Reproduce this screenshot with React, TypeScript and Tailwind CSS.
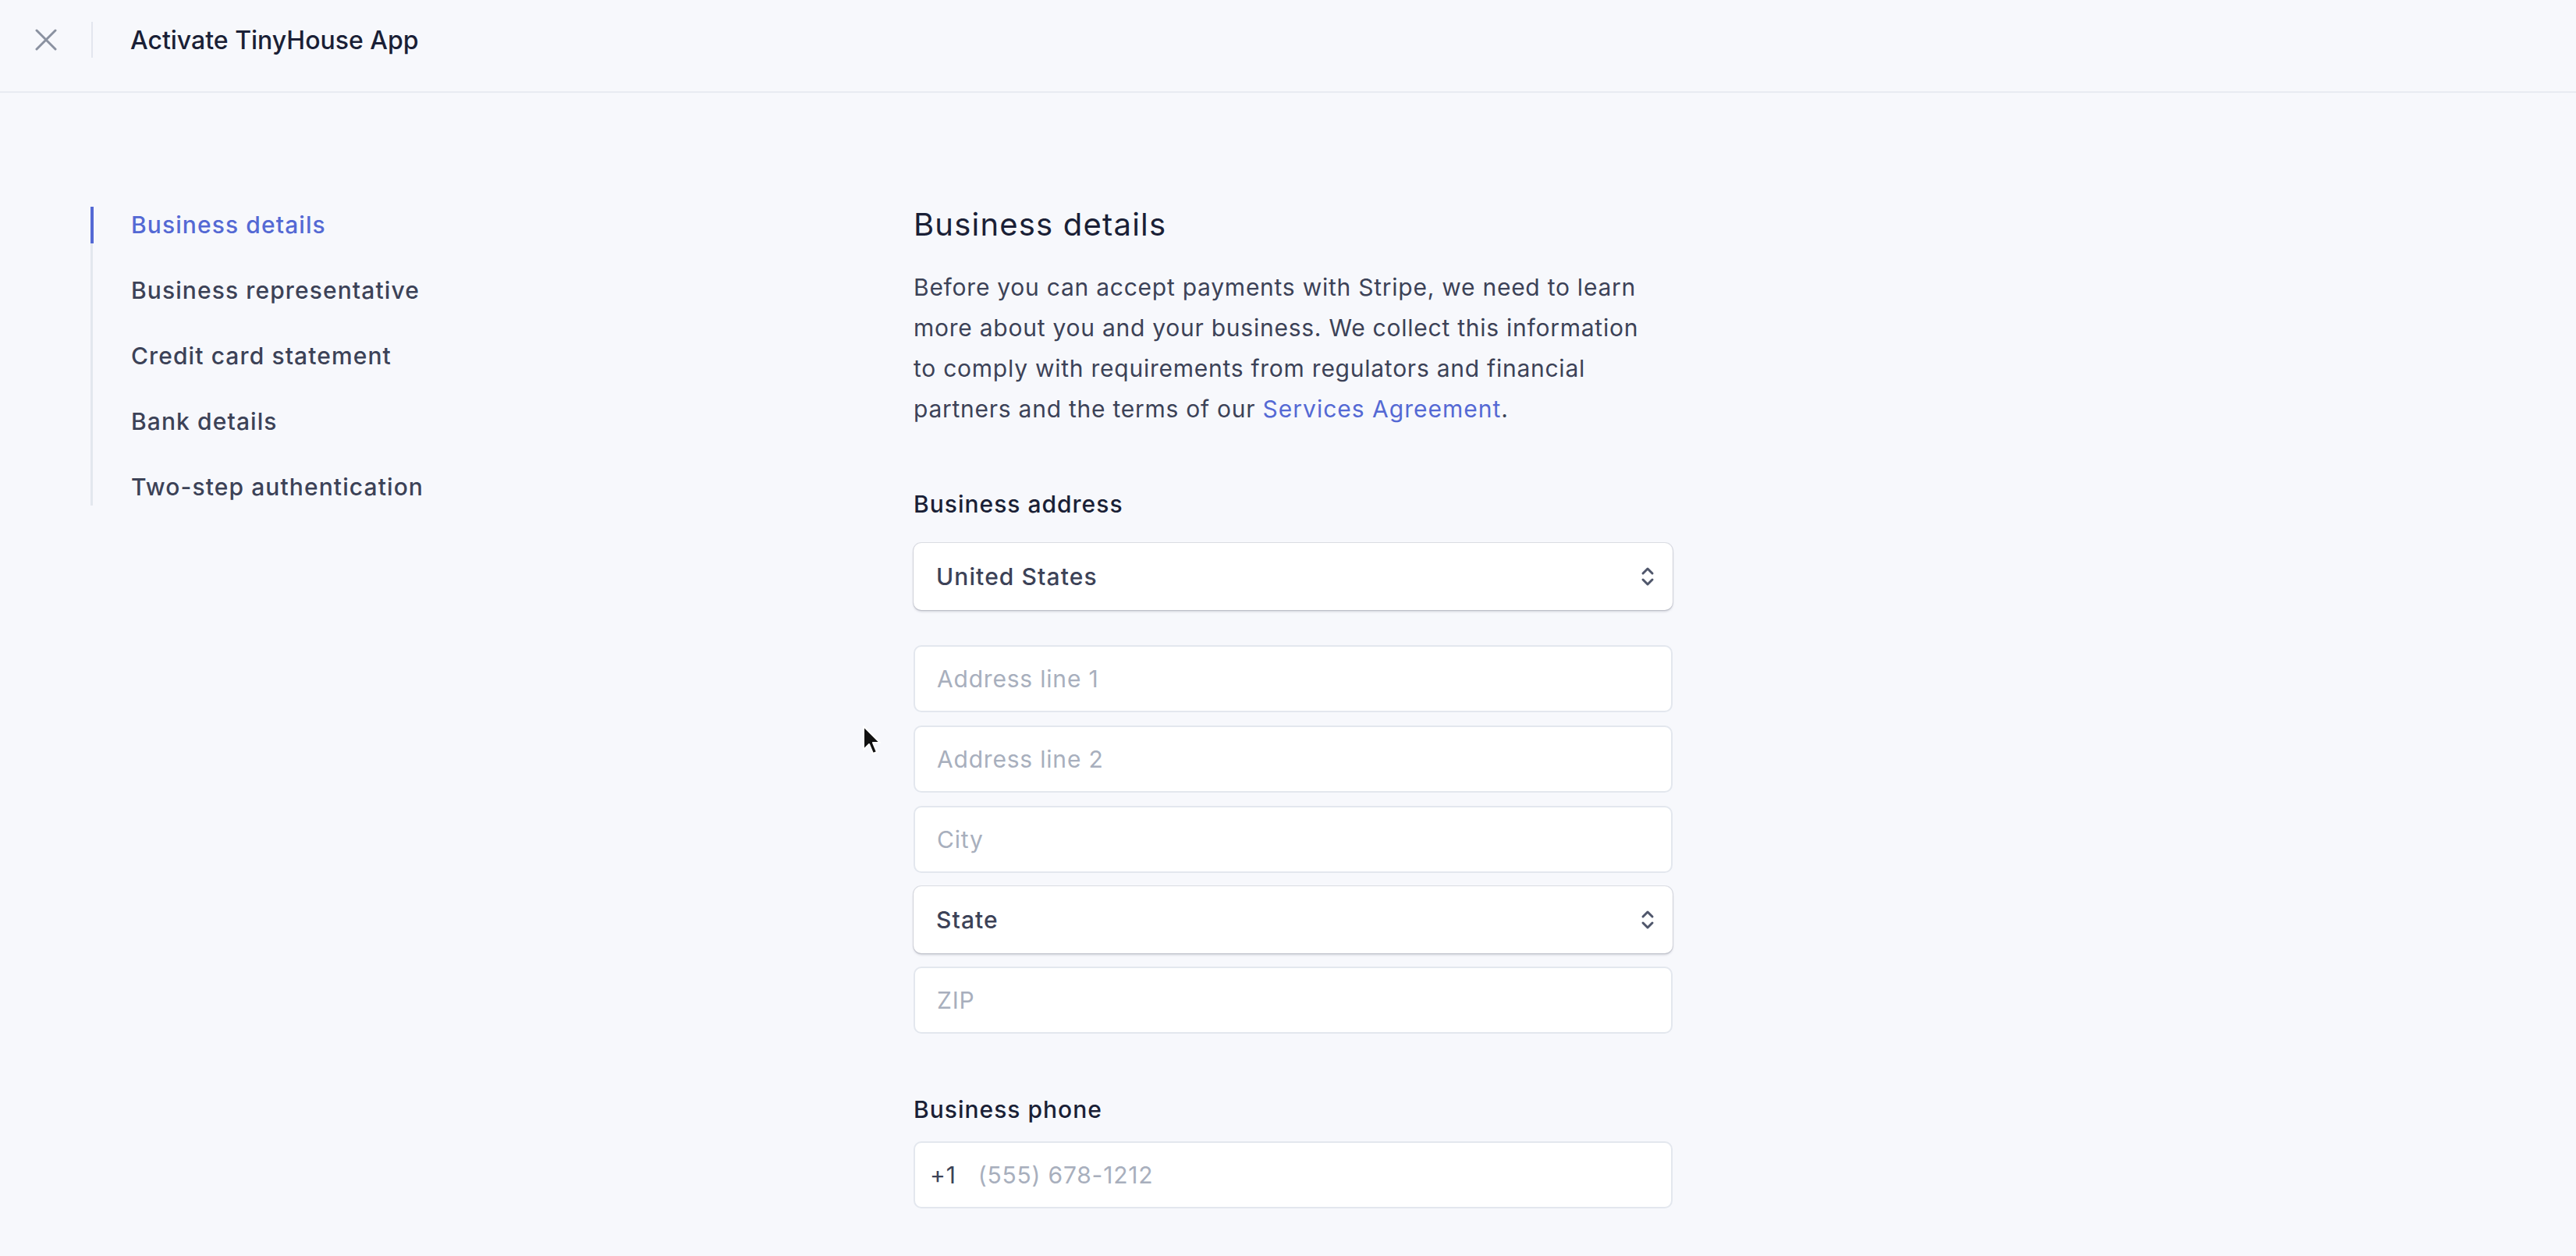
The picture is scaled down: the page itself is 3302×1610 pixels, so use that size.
const steps = [
    'Business details',
    'Business representative',
    'Credit card statement',
    'Bank details',
    'Two-step authentication',
];

const intro = [
    'Before you can accept payments with Stripe, we need to learn',
    'more about you and your business. We collect this information',
    'to comply with requirements from regulators and financial',
];

function Chevrons() {
    return (
        <svg width="20" height="30" viewBox="0 0 20 30" fill="none" className="shrink-0">
            <path d="M4 11 L10 5 L16 11" stroke="#4f566b" strokeWidth="3" strokeLinecap="round" strokeLinejoin="round" />
            <path d="M4 19 L10 25 L16 19" stroke="#4f566b" strokeWidth="3" strokeLinecap="round" strokeLinejoin="round" />
        </svg>
    );
}

function SelectBox({ value }: { value: string }) {
    return (
        <div className="h-[86px] flex items-center justify-between pl-[29px] pr-[22px] bg-white rounded-[10px] shadow-[0_0_0_1px_rgba(60,66,87,0.14),0_2px_3px_rgba(60,66,87,0.22)] text-[30px] font-medium tracking-[1.1px] text-[#3c4257]">
            <span>{value}</span>
            <Chevrons />
        </div>
    );
}

function TextBox({ placeholder }: { placeholder: string }) {
    return (
        <div className="h-[86px] flex items-center pl-[28px] bg-white rounded-[10px] border-2 border-[#e3e7ee] text-[30px] tracking-[0.8px] text-[#a8afbd]">
            {placeholder}
        </div>
    );
}

function Cursor() {
    return (
        <svg width="26" height="40" viewBox="0 0 26 40" className="absolute left-[1104px] top-[929px]">
            <path
                d="M3 2 L3 32 L10 25 L15 37 L20 35 L15 23 L24 23 Z"
                fill="#111"
                stroke="#fff"
                strokeWidth="2"
                strokeLinejoin="round"
            />
        </svg>
    );
}

export default function App() {
    return (
        <div className="relative min-h-screen bg-[#f7f8fc] font-['Inter',sans-serif] text-[#3c4257]">
            {/* Header */}
            <header className="h-[119px] flex items-center pb-[16px] border-b-2 border-[#e8ebf2]">
                <div className="w-[117px] flex justify-center">
                    <svg width="28" height="28" viewBox="0 0 28 28">
                        <path d="M2 2 L26 26 M26 2 L2 26" stroke="#8a91a0" strokeWidth="3" strokeLinecap="round" />
                    </svg>
                </div>
                <div className="w-[2px] h-[46px] bg-[#e3e6ee]" />
                <h1 className="ml-[48px] mt-[2px] text-[32px] leading-[40px] font-medium text-[#1a1f36]">Activate TinyHouse App</h1>
            </header>

            <div className="flex pl-[116px] pt-[147px] pb-[60px]">
                {/* Sidebar */}
                <nav className="w-[1055px] shrink-0 -mt-[1px]">
                    <ul className="flex flex-col gap-[37px] border-l-[3px] border-[#e3e7ee] w-fit">
                        {steps.map((step, i) => (
                            <li
                                key={step}
                                className={`h-[47px] flex items-center text-[30px] font-medium tracking-[1.1px] ${
                                    i === 0
                                        ? '-ml-[3px] border-l-4 border-[#5469d4] pl-[48px] text-[#5469d4]'
                                        : 'pl-[49px] text-[#3c4257]'
                                }`}
                            >
                                {step}
                            </li>
                        ))}
                    </ul>
                </nav>

                {/* Form */}
                <main className="w-[973px] -mt-[2px]">
                    <h2 className="text-[40px] leading-[48px] tracking-[1.2px] text-[#1a1f36]">Business details</h2>
                    <p className="mt-[30px] text-[30px] leading-[52px] tracking-[0.75px] text-[#3c4257]">
                        {intro.map((line) => (
                            <span key={line} className="block whitespace-nowrap">
                                {line}
                            </span>
                        ))}
                        <span className="block whitespace-nowrap">
                            partners and the terms of our{' '}
                            <span className="text-[#5469d4] tracking-[1px]">Services Agreement</span>.
                        </span>
                    </p>

                    <div className="mt-[76px] text-[30px] leading-[40px] font-medium tracking-[1px] text-[#1a1f36]">Business address</div>
                    <div className="mt-[30px]">
                        <SelectBox value="United States" />
                    </div>
                    <div className="mt-[45px] flex flex-col gap-[17px]">
                        <TextBox placeholder="Address line 1" />
                        <TextBox placeholder="Address line 2" />
                        <TextBox placeholder="City" />
                        <SelectBox value="State" />
                        <TextBox placeholder="ZIP" />
                    </div>

                    <div className="mt-[77px] text-[30px] leading-[40px] font-medium tracking-[1px] text-[#1a1f36]">Business phone</div>
                    <div className="mt-[21px] h-[86px] flex items-center pl-[19px] bg-white rounded-[10px] border-2 border-[#e3e7ee] text-[30px] tracking-[0.8px]">
                        <span className="text-[#3c4257]">+1</span>
                        <span className="ml-[28px] text-[#a8afbd]">(555) 678-1212</span>
                    </div>
                </main>
            </div>

            <Cursor />
        </div>
    );
}
